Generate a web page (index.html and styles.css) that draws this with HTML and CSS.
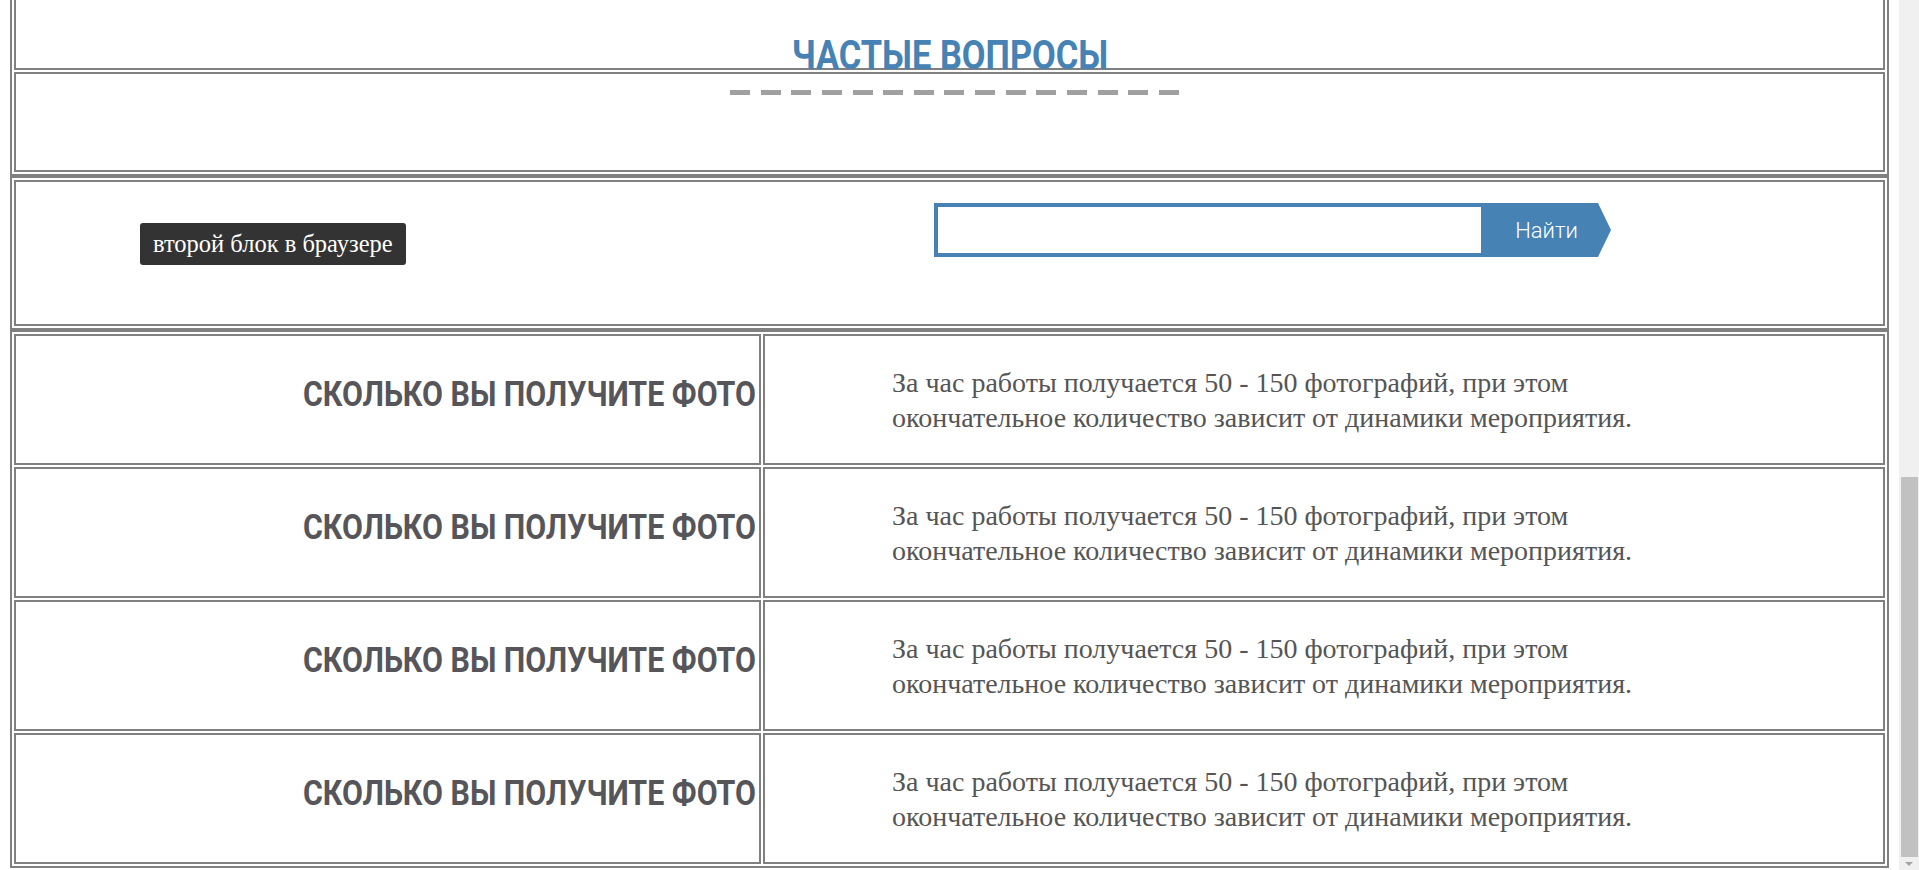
FILE: index.html
```html
<!DOCTYPE html>
<html lang="ru">
<head>
<meta charset="utf-8">
<title>Частые вопросы</title>
<link rel="stylesheet" href="styles.css">
</head>
<body>
<div class="screen">
  <main class="page">
    <section class="tbl tbl-top">
      <div class="cell cell-title"><h2 class="faq-title">ЧАСТЫЕ ВОПРОСЫ</h2></div>
      <div class="cell cell-dash"><div class="dashes"></div></div>
    </section>
    <section class="tbl tbl-search">
      <div class="cell cell-search">
        <div class="search-left"><span class="badge">второй блок в браузере</span></div>
        <form class="search">
          <input class="search-input" type="text">
          <button class="search-btn" type="button">Найти</button>
        </form>
      </div>
    </section>
    <section class="tbl tbl-faq">
      <div class="faq-row">
        <div class="cell q"><h3 class="q-text">СКОЛЬКО ВЫ ПОЛУЧИТЕ ФОТО</h3></div>
        <div class="cell a"><p class="a-text">За час работы получается 50 - 150 фотографий, при этом окончательное количество зависит от динамики мероприятия.</p></div>
      </div>
      <div class="faq-row">
        <div class="cell q"><h3 class="q-text">СКОЛЬКО ВЫ ПОЛУЧИТЕ ФОТО</h3></div>
        <div class="cell a"><p class="a-text">За час работы получается 50 - 150 фотографий, при этом окончательное количество зависит от динамики мероприятия.</p></div>
      </div>
      <div class="faq-row">
        <div class="cell q"><h3 class="q-text">СКОЛЬКО ВЫ ПОЛУЧИТЕ ФОТО</h3></div>
        <div class="cell a"><p class="a-text">За час работы получается 50 - 150 фотографий, при этом окончательное количество зависит от динамики мероприятия.</p></div>
      </div>
      <div class="faq-row">
        <div class="cell q"><h3 class="q-text">СКОЛЬКО ВЫ ПОЛУЧИТЕ ФОТО</h3></div>
        <div class="cell a"><p class="a-text">За час работы получается 50 - 150 фотографий, при этом окончательное количество зависит от динамики мероприятия.</p></div>
      </div>
    </section>
  </main>
  <div class="scrollbar">
    <div class="thumb"></div>
    <div class="arrow-box"><span class="arrow-down"></span></div>
  </div>
</div>
</body>
</html>
```

FILE: styles.css
```css
* { box-sizing: border-box; }
html, body {
  margin: 0;
  height: 100%;
  overflow: hidden;
  background: #fff;
}
.screen {
  display: flex;
  height: 870px;
}
.page {
  flex: 1;
  min-width: 0;
  padding: 0 10px;
}
.tbl {
  border: 2px solid #808080;
  padding: 2px;
  display: flex;
  flex-direction: column;
  gap: 2px;
}
.cell {
  border: 2px solid #808080;
}
.tbl-top {
  border-top: 0;
  padding-top: 0;
}
.cell-title {
  border-top: 0;
  height: 70px;
  display: flex;
  justify-content: center;
  align-items: flex-end;
}
.faq-title {
  display: inline-block;
  margin: 0 0 -3px;
  font-family: Roboto, "Liberation Sans", sans-serif;
  font-weight: 700;
  font-size: 40px;
  line-height: 30px;
  color: #4682b4;
  transform: scaleX(0.86);
  transform-origin: center;
}
.cell-dash {
  height: 100px;
}
.dashes {
  margin-top: 16px;
  margin-left: calc(50% - 219.5px);
  width: 449px;
  height: 5px;
  background: repeating-linear-gradient(90deg, #a0a0a0 0 20px, transparent 20px 30.64px);
}
.cell-search {
  height: 146px;
  display: grid;
  grid-template-columns: 918px 1fr;
  align-items: start;
}
.search-left {
  padding: 41px 0 0 124px;
}
.badge {
  display: inline-block;
  background: #333;
  color: #fff;
  border-radius: 3px;
  padding: 8px 13px;
  font-family: "Liberation Serif", serif;
  font-size: 24.5px;
  line-height: 26px;
}
.search {
  margin: 21px 0 0;
  display: flex;
  height: 54px;
}
.search-input {
  width: 551px;
  height: 54px;
  border: 4px solid #4682b4;
  margin: 0;
  padding: 0 10px;
  background: #fff;
  outline: none;
}
.search-btn {
  width: 126px;
  height: 54px;
  margin: 0;
  border: 0;
  padding: 0 3px 0 0;
  background: #4682b4;
  color: #fff;
  font-family: Roboto, "Liberation Sans", sans-serif;
  font-weight: 300;
  font-size: 22px;
  clip-path: polygon(0 0, calc(100% - 13px) 0, 100% 50%, calc(100% - 13px) 100%, 0 100%);
}
.faq-row {
  display: flex;
  gap: 2px;
  height: 131px;
}
.q {
  flex: none;
  width: 747px;
  display: flex;
  align-items: center;
  justify-content: flex-end;
  padding: 0 3px 10px 0;
}
.q-text {
  display: inline-block;
  margin: 0;
  font-family: Roboto, "Liberation Sans", sans-serif;
  font-weight: 700;
  font-size: 35px;
  line-height: 40px;
  color: #55555a;
  transform: scaleX(0.868);
  transform-origin: right center;
  white-space: nowrap;
}
.a {
  flex: 1;
  display: flex;
  align-items: center;
}
.a-text {
  margin: 0;
  padding-left: 127px;
  width: 887px;
  font-family: "Liberation Serif", serif;
  font-size: 28px;
  line-height: 35px;
  color: #555;
}
.scrollbar {
  flex: none;
  width: 20px;
  background: #f0f0f0;
  display: flex;
  flex-direction: column;
}
.thumb {
  margin: 477px 1px 0 2px;
  height: 380px;
  background: #c1c1c1;
}
.arrow-box {
  flex: 1;
  display: flex;
  justify-content: center;
  align-items: center;
}
.arrow-down {
  width: 0;
  height: 0;
  border-left: 4px solid transparent;
  border-right: 4px solid transparent;
  border-top: 4px solid #a3a3a3;
}
```
